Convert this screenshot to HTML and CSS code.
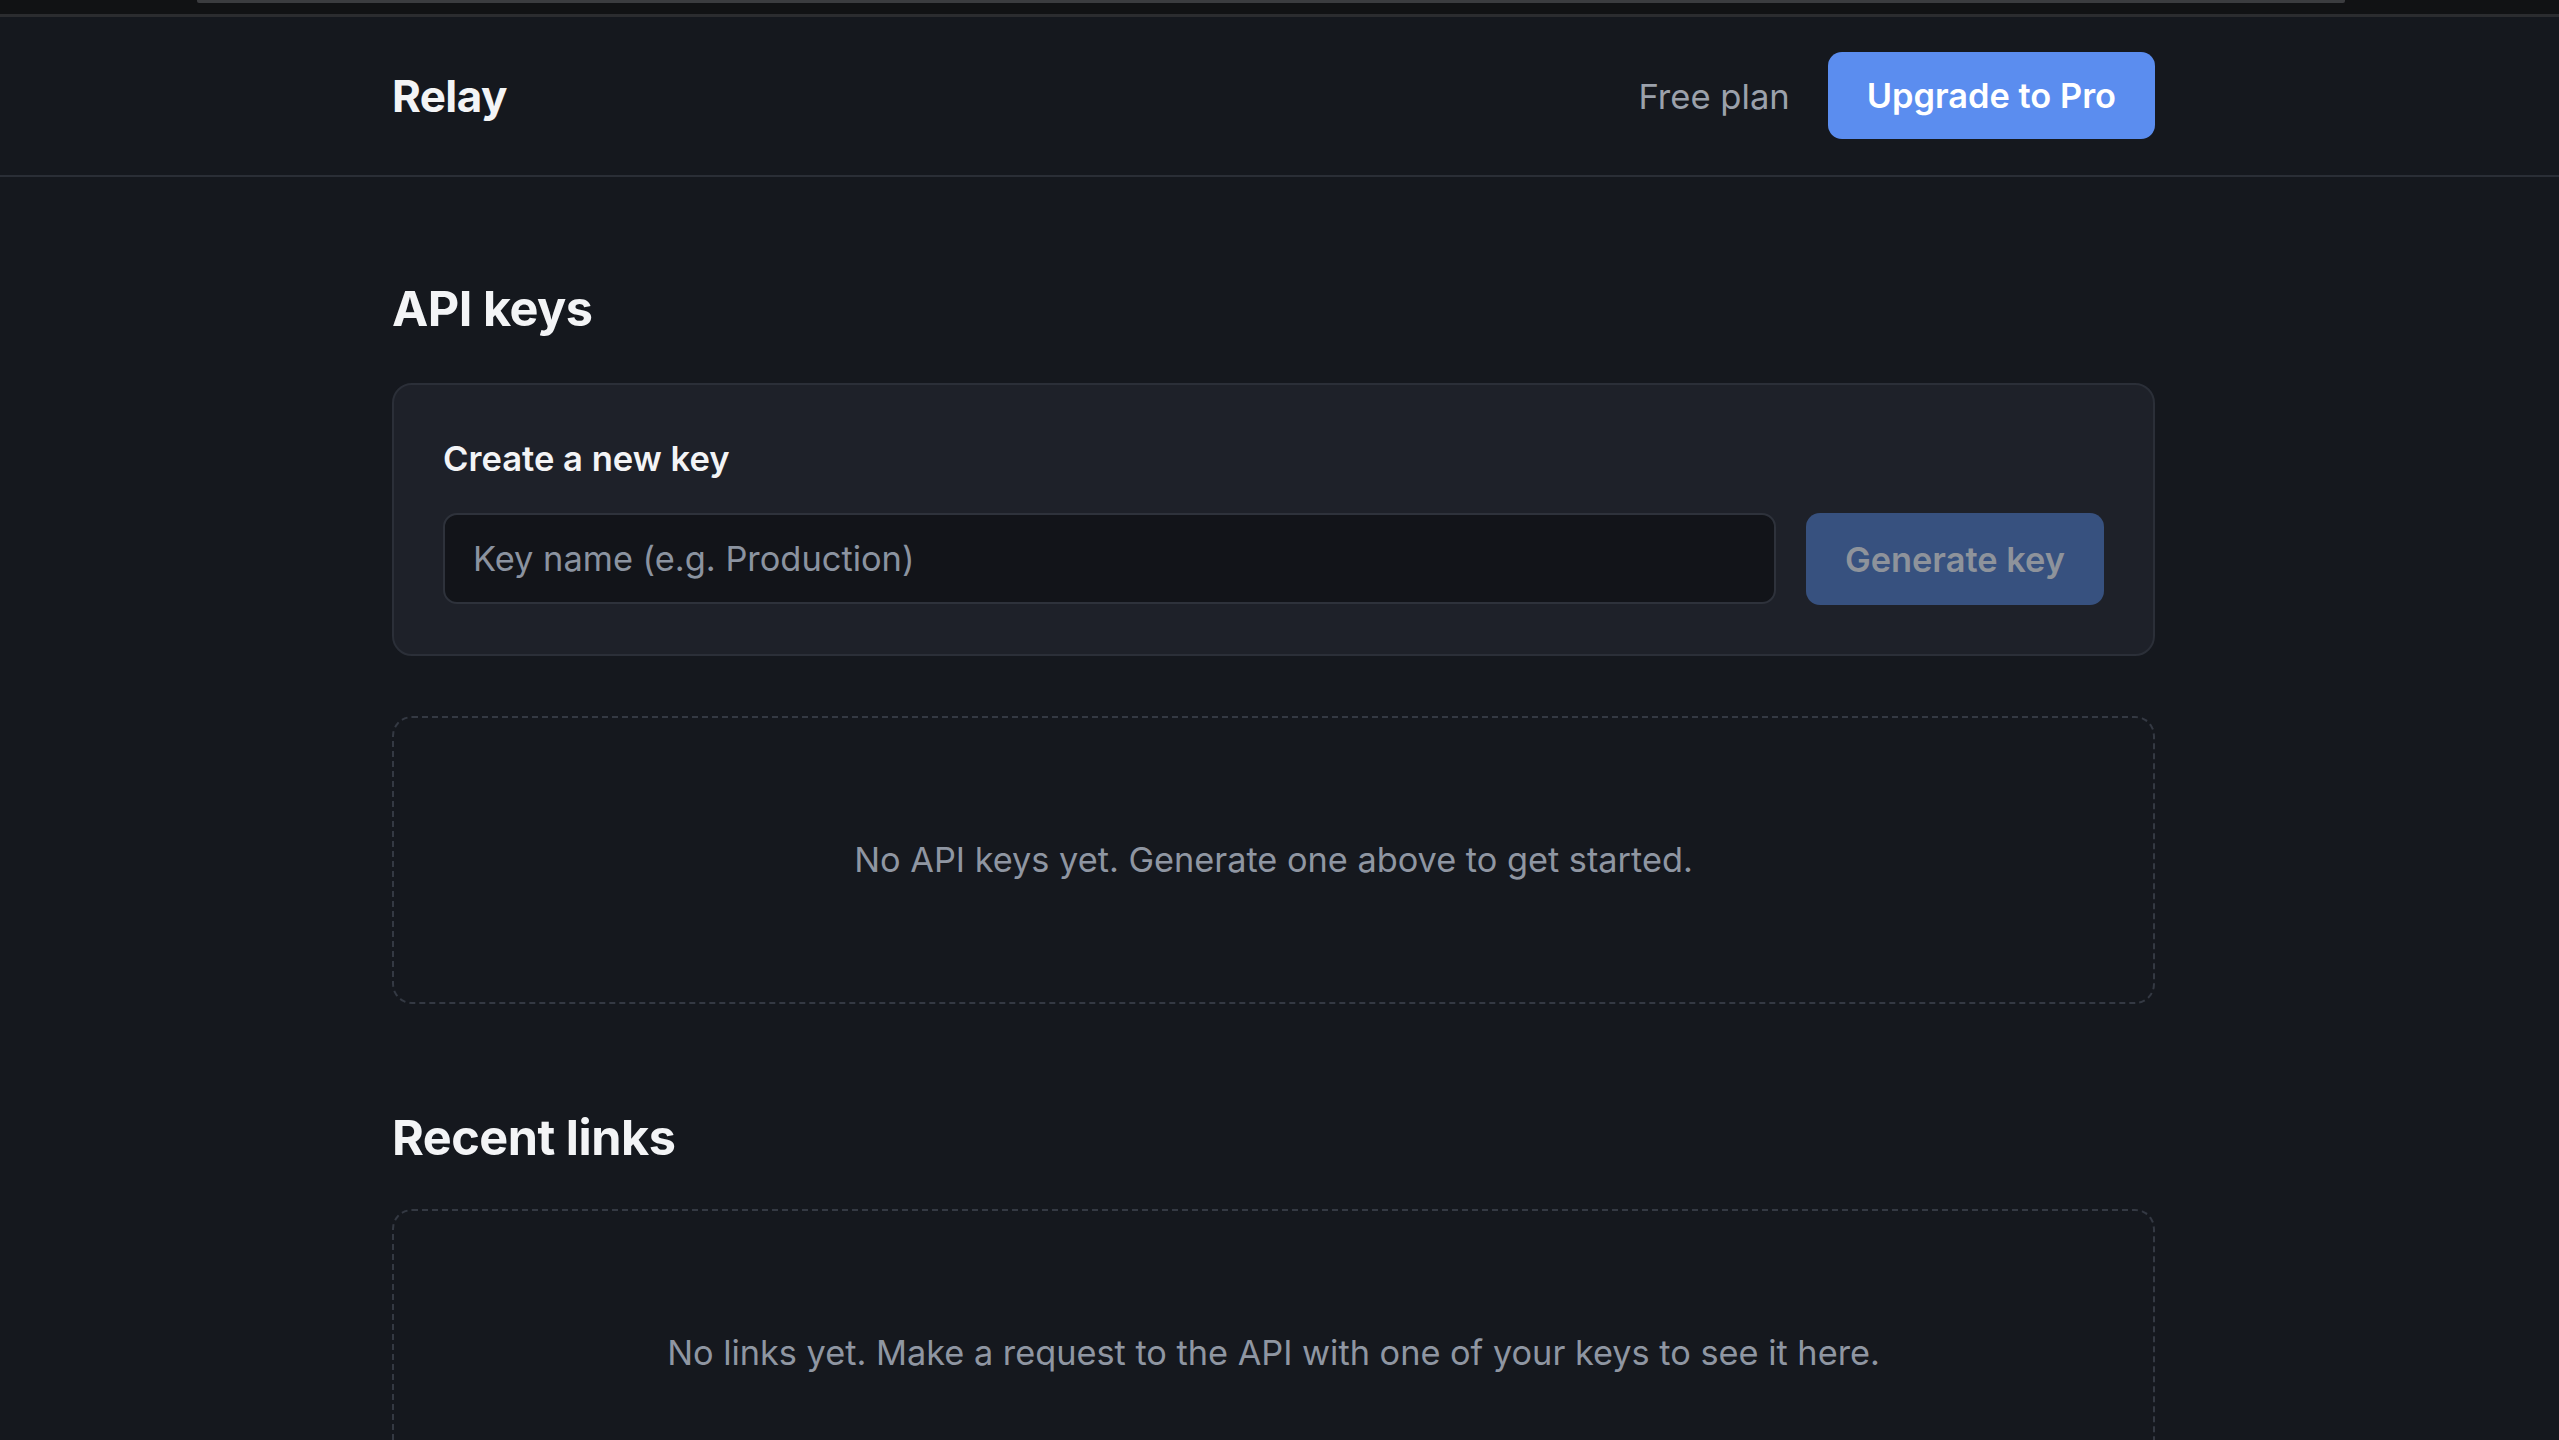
FILE: index.html
```html
<!DOCTYPE html>
<html lang="en">
<head>
<meta charset="utf-8">
<title>Relay · API keys</title>
<link rel="stylesheet" href="styles.css">
</head>
<body>
  <div class="topstrip"><div class="topstrip-bar"></div></div>

  <header class="site-header">
    <div class="wrap header-row">
      <div class="brand">Relay</div>
      <div class="header-actions">
        <span class="plan">Free plan</span>
        <button class="btn btn-primary" type="button">Upgrade to Pro</button>
      </div>
    </div>
  </header>

  <main class="main">
    <div class="wrap">
      <section class="section">
        <h2 class="section-title">API keys</h2>

        <div class="card">
          <h3 class="card-title">Create a new key</h3>
          <form class="key-form">
            <input class="text-input" type="text" placeholder="Key name (e.g. Production)">
            <button class="btn btn-disabled" type="button" disabled>Generate key</button>
          </form>
        </div>

        <div class="empty">No API keys yet. Generate one above to get started.</div>
      </section>

      <section class="section">
        <h2 class="section-title">Recent links</h2>
        <div class="empty">No links yet. Make a request to the API with one of your keys to see it here.</div>
      </section>
    </div>
  </main>
</body>
</html>
```

FILE: styles.css
```css
* {
  box-sizing: border-box;
}

html, body {
  margin: 0;
  padding: 0;
  background: #15181e;
  color: #eef0f3;
  font-family: Inter, "Noto Sans", "Liberation Sans", sans-serif;
  overflow: hidden;
}

/* thin chrome strip along the very top */
.topstrip {
  height: 17px;
  background: #111214;
  border-bottom: 3px solid #2b2c2f;
  padding: 0 214px 0 197px;
}

.topstrip-bar {
  height: 3px;
  background: #3b3c3f;
  border-radius: 0 0 2px 2px;
}

.wrap {
  max-width: 1763px;
  margin: 0 auto;
}

/* header */
.site-header {
  border-bottom: 2px solid #2a2e36;
  padding: 35px 12px 36px 0;
}

.header-row {
  display: flex;
  align-items: center;
  justify-content: space-between;
}

.brand {
  font-size: 44px;
  font-weight: 700;
  letter-spacing: -0.6px;
  color: #f3f4f6;
}

.header-actions {
  display: flex;
  align-items: center;
  gap: 38px;
}

.plan {
  font-size: 34.6px;
  color: #9ba1ab;
}

.btn {
  font-family: inherit;
  border: 0;
  border-radius: 14px;
  height: 87px;
  padding: 0 39px;
  font-size: 34.4px;
  font-weight: 600;
  white-space: nowrap;
  cursor: pointer;
}

.btn-primary {
  background: #5b8def;
  color: #ffffff;
}

.btn-disabled {
  background: #37517f;
  color: #8e939b;
  height: 92px;
  cursor: default;
}

/* main content */
.main {
  padding: 102px 12px 0 0;
}

.section + .section {
  margin-top: 104px;
}

.section-title {
  margin: 0 0 44px;
  font-size: 48.6px;
  font-weight: 700;
  letter-spacing: -0.5px;
  line-height: 60px;
  color: #f3f4f6;
}

.section + .section .section-title {
  margin-bottom: 41px;
}

.card {
  background: #1e2129;
  border: 2px solid #2b2f38;
  border-radius: 20px;
  padding: 49px 49px 49px;
}

.card-title {
  margin: 0 0 31px;
  font-size: 34.6px;
  font-weight: 600;
  line-height: 48px;
  color: #f3f4f6;
}

.key-form {
  display: flex;
  gap: 30px;
  margin: 0;
}

.text-input {
  flex: 1;
  height: 91px;
  background: #121419;
  border: 2px solid #2e323b;
  border-radius: 14px;
  padding: 0 28px;
  font-family: inherit;
  font-size: 34.4px;
  color: #eef0f3;
  outline: none;
}

.text-input::placeholder {
  color: #8b93a0;
}

.empty {
  margin-top: 60px;
  border: 2px dashed #343943;
  border-radius: 20px;
  padding: 118px 32px;
  text-align: center;
  font-size: 34.3px;
  line-height: 48px;
  color: #8f96a2;
}

.section-title + .empty {
  margin-top: 0;
}
```
